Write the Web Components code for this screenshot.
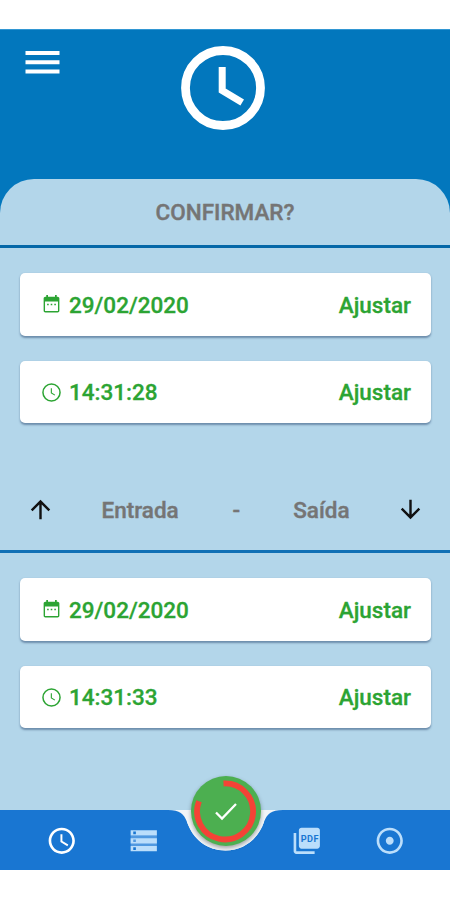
<!DOCTYPE html>
<html lang="pt-BR">
<head>
<meta charset="utf-8">
<meta name="viewport" content="width=device-width, initial-scale=1">
<title>Confirmar ponto</title>
<style>
  :root {
    --header: #0277bd;
    --sheet: #b3d6ea;
    --bar: #1976d2;
    --green: #2ca433;
    --grey: #757575;
  }
  body {
    margin: 0;
    background: #fff;
    font-family: Roboto, "Liberation Sans", sans-serif;
  }
</style>
</head>
<body>
<punch-screen>
  <app-header slot="header"></app-header>
  <sheet-title slot="title">CONFIRMAR?</sheet-title>
  <punch-group>
    <punch-card icon="calendar" value="29/02/2020">Ajustar</punch-card>
    <punch-card icon="clock" value="14:31:28">Ajustar</punch-card>
  </punch-group>
  <direction-row>
    <span slot="in">Entrada</span>
    <span slot="out">Saída</span>
  </direction-row>
  <punch-group>
    <punch-card icon="calendar" value="29/02/2020">Ajustar</punch-card>
    <punch-card icon="clock" value="14:31:33">Ajustar</punch-card>
  </punch-group>
  <bottom-nav slot="nav"><confirm-button></confirm-button></bottom-nav>
</punch-screen>

<script>
// ── Icons ─────────────────────────────────────────────────────────
const ICONS = {
  calendar: `<path d="M19 3h-1V1h-2v2H8V1H6v2H5c-1.11 0-1.99.9-1.99 2L3 19c0 1.1.89 2 2 2h14c1.1 0 2-.9 2-2V5c0-1.1-.9-2-2-2zm.4 16.4H4.6V8.600h14.800v10.800zM7 11h1.800v1.800H7zm4.100 0h1.800v1.800h-1.800zm4.100 0H17v1.800h-1.800z"/>`,
  clock: `<g fill="none" stroke="currentColor"><circle cx="12" cy="12" r="10.800" stroke-width="1.900"/><path d="M11.800 6.500v6l4.500 2.800" stroke-width="1.400"/></g>`,
  schedule: `<path d="M11.990 2C6.470 2 2 6.480 2 12s4.470 10 9.990 10C17.520 22 22 17.520 22 12S17.520 2 11.990 2zM12 20c-4.420 0-8-3.580-8-8s3.580-8 8-8 8 3.580 8 8-3.580 8-8 8zm.5-13H11v6l5.250 3.150.75-1.230-4.500-2.670z"/>`,
  storage: `<path d="M2 8h20v8H2z" opacity=".35"/><path d="M2 20h20v-4H2v4zm2-3h2v2H4v-2zM2 4v4h20V4H2zm4 3H4V5h2v2zm-4 7h20v-4H2v4zm2-3h2v2H4v-2z"/>`,
  pdf: `<path d="M20 2H8c-1.100 0-2 .9-2 2v12c0 1.100.9 2 2 2h12c1.100 0 2-.9 2-2V4c0-1.100-.9-2-2-2zM4 6H2v14c0 1.100.9 2 2 2h14v-2H4V6z"/><text x="14.200" y="12.600" text-anchor="middle" font-size="7" font-weight="700" textLength="13.500" lengthAdjust="spacing" style="fill:var(--bar)">PDF</text>`,
  target: `<path d="M12 2C6.490 2 2 6.490 2 12s4.490 10 10 10 10-4.490 10-10S17.510 2 12 2zm0 18c-4.410 0-8-3.590-8-8s3.590-8 8-8 8 3.590 8 8-3.590 8-8 8zm3-8c0 1.660-1.340 3-3 3s-3-1.340-3-3 1.340-3 3-3 3 1.340 3 3z"/>`,
  up: `<path d="M4 12l1.410 1.410L11 7.830V20h2V7.830l5.580 5.590L20 12l-8-8-8 8z"/>`,
  down: `<path d="M20 12l-1.410-1.410L13 16.170V4h-2v12.170l-5.580-5.590L4 12l8 8 8-8z"/>`,
};

class AppIcon extends HTMLElement {
  static observedAttributes = ["name"];

  #shadow = this.attachShadow({ mode: "open" });

  attributeChangedCallback() {
    this.#shadow.innerHTML = `
      <style>
        :host { display: block; flex: none; width: 24px; height: 24px; }
        svg { display: block; width: 100%; height: 100%; fill: currentColor; overflow: visible; }
      </style>
      <svg viewBox="0 0 24 24">${ICONS[this.getAttribute("name")] ?? ""}</svg>
    `;
  }
}
customElements.define("app-icon", AppIcon);

// ── Header ────────────────────────────────────────────────────────
class AppHeader extends HTMLElement {
  constructor() {
    super();
    this.attachShadow({ mode: "open" }).innerHTML = `
      <style>
        :host {
          display: grid;
          grid-template-columns: 1fr 100px 1fr;
          align-items: start;
          box-sizing: border-box;
          height: 149.500px;
          border-top: 1px solid #3297d3;
          background: var(--header);
          color: #fff;
        }
        .menu { width: 35px; height: 24px; margin: 20px 0 0 25px; }
        .menu path { stroke: #fff; stroke-width: 4; }
        .logo { width: 100px; height: 100px; margin: 8px 0 0 -2.300px; }
      </style>
      <svg class="menu" viewBox="0 0 35 24"><path d="M.5 3h34M.5 12.300h34M.5 21.500h34"/></svg>
      <svg class="logo" viewBox="0 0 100 100" fill="none" stroke="#fff">
        <circle cx="50" cy="50" r="37.500" stroke-width="8.800"/>
        <path d="M49.200 29v23.500l20 12" stroke-width="7"/>
      </svg>
    `;
  }
}
customElements.define("app-header", AppHeader);

// ── Sheet title ───────────────────────────────────────────────────
class SheetTitle extends HTMLElement {
  constructor() {
    super();
    this.attachShadow({ mode: "open" }).innerHTML = `
      <style>
        :host {
          display: flex;
          align-items: center;
          justify-content: center;
          box-sizing: border-box;
          height: 69.500px;
          padding-top: 1px;
          border-bottom: 3px solid #0568a8;
          color: var(--grey);
          font-size: 22.500px;
          font-weight: 500;
          -webkit-text-stroke: .4px;
        }
      </style>
      <slot></slot>
    `;
  }
}
customElements.define("sheet-title", SheetTitle);

// ── Date / time cards ─────────────────────────────────────────────
class PunchGroup extends HTMLElement {
  constructor() {
    super();
    this.attachShadow({ mode: "open" }).innerHTML = `
      <style>
        :host {
          display: flex;
          flex-direction: column;
          gap: 25px;
          padding: 25px 19px 0 20px;
        }
      </style>
      <slot></slot>
    `;
  }
}
customElements.define("punch-group", PunchGroup);

class PunchCard extends HTMLElement {
  #shadow = this.attachShadow({ mode: "open" });

  connectedCallback() {
    const icon = this.getAttribute("icon");
    this.#shadow.innerHTML = `
      <style>
        :host {
          display: flex;
          align-items: center;
          box-sizing: border-box;
          height: 62.500px;
          padding: 1px 20px 0 21px;
          border-radius: 5px;
          background: #fff;
          box-shadow: 0 1.500px 2px rgba(40, 70, 110, .5);
          color: var(--green);
          font-size: 22.500px;
          font-weight: 500;
          -webkit-text-stroke: .3px;
        }
        app-icon { width: 21px; height: 21px; margin-right: 7px; }
        app-icon[name="clock"] { width: 19px; height: 19px; margin: 0 8px 0 1px; }
        .value { flex: 1; }
      </style>
      <app-icon name="${icon}"></app-icon>
      <span class="value">${this.getAttribute("value")}</span>
      <slot></slot>
    `;
  }
}
customElements.define("punch-card", PunchCard);

// ── Entrada / Saída row ───────────────────────────────────────────
class DirectionRow extends HTMLElement {
  constructor() {
    super();
    this.attachShadow({ mode: "open" }).innerHTML = `
      <style>
        :host {
          display: grid;
          grid-template-columns: 28px 172px 20px 150px 28px;
          justify-content: space-between;
          align-items: center;
          justify-items: center;
          box-sizing: border-box;
          height: 84px;
          margin-top: 46px;
          padding: 0 25.500px 0 26px;
          border-bottom: 3px solid #1170b5;
          color: var(--grey);
          font-size: 22.500px;
          font-weight: 500;
          -webkit-text-stroke: .4px;
        }
        app-icon { width: 29px; height: 29px; color: #111; }
      </style>
      <app-icon name="up"></app-icon>
      <slot name="in"></slot>
      <span>-</span>
      <slot name="out"></slot>
      <app-icon name="down"></app-icon>
    `;
  }
}
customElements.define("direction-row", DirectionRow);

// ── Confirm button with progress ring ─────────────────────────────
class ConfirmButton extends HTMLElement {
  constructor() {
    super();
    this.attachShadow({ mode: "open" }).innerHTML = `
      <style>
        :host {
          display: block;
          width: 70px;
          height: 70px;
          border-radius: 50%;
          background: #4caf50;
          box-shadow: 0 2px 4px rgba(0, 0, 0, .35);
        }
        svg { display: block; }
      </style>
      <svg width="70" height="70" viewBox="0 0 70 70" fill="none">
        <path d="M32.500 7.500A28 28 0 1 1 8 25.300" stroke="#f44336" stroke-width="5.800"/>
        <path d="M25 36.500l6 6 14-14.500" stroke="#fff" stroke-width="2.300"/>
      </svg>
    `;
  }
}
customElements.define("confirm-button", ConfirmButton);

// ── Bottom navigation ─────────────────────────────────────────────
class BottomNav extends HTMLElement {
  constructor() {
    super();
    this.attachShadow({ mode: "open" }).innerHTML = `
      <style>
        :host { display: grid; position: relative; height: 60px; }
        .shape, nav { grid-area: 1 / 1; }
        nav {
          display: flex;
          justify-content: space-between;
          align-items: center;
          padding: 1px 45px 0 45.500px;
          color: #bbdefb;
        }
        nav div { display: flex; gap: 51px; }
        app-icon { width: 31.500px; height: 31.500px; }
        .active { color: #fff; }
        /* the button floats over the notch */
        ::slotted(confirm-button) { position: absolute; left: 190.500px; top: -34.500px; }
      </style>
      <svg class="shape" width="450" height="60" viewBox="0 0 450 60">
        <path d="M170 0H282V30H170z" fill="#f1f5f8"/>
        <path d="M0 0H168C180 0 184 4 187 12C193 29 207 40.500 225.500 40.500S258 29 264 12C267 4 271 0 283 0H450V60H0z" fill="#1976d2"/>
        <path d="M187 12C193 29 207 40.500 225.500 40.500S258 29 264 12z" fill="#f1f5f8"/>
      </svg>
      <nav>
        <div><app-icon class="active" name="schedule"></app-icon><app-icon name="storage"></app-icon></div>
        <div><app-icon name="pdf"></app-icon><app-icon name="target"></app-icon></div>
      </nav>
      <slot></slot>
    `;
  }
}
customElements.define("bottom-nav", BottomNav);

// ── Screen ────────────────────────────────────────────────────────
class PunchScreen extends HTMLElement {
  constructor() {
    super();
    this.attachShadow({ mode: "open" }).innerHTML = `
      <style>
        :host {
          display: flex;
          flex-direction: column;
          box-sizing: border-box;
          height: 900px;
          padding: 29px 0 30px;
        }
        .back {
          display: flex;
          flex: 1;
          background: linear-gradient(var(--header) 50px, var(--sheet) 50px);
        }
        main {
          flex: 1;
          border-radius: 34px 34px 0 0;
          background: var(--sheet);
        }
      </style>
      <slot name="header"></slot>
      <div class="back">
        <main><slot name="title"></slot><slot></slot></main>
      </div>
      <slot name="nav"></slot>
    `;
  }
}
customElements.define("punch-screen", PunchScreen);
</script>
</body>
</html>
